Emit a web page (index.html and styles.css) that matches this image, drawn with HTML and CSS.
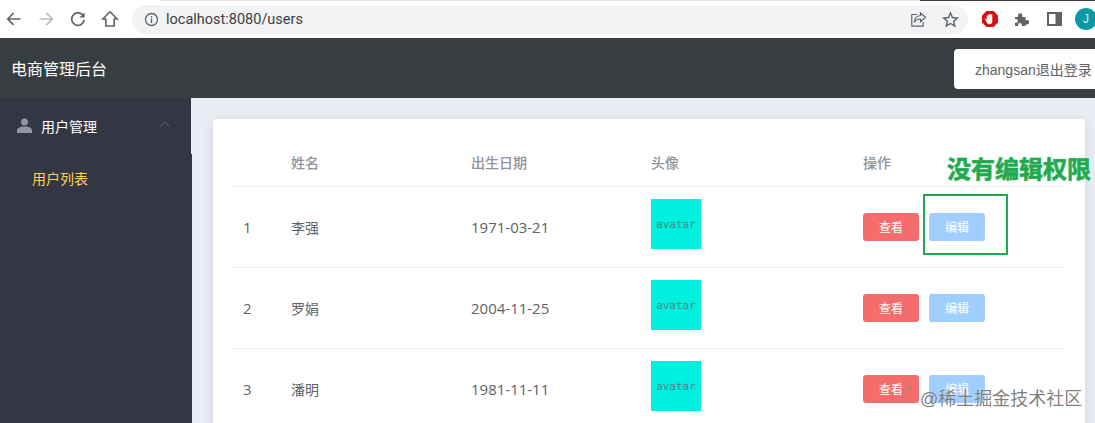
FILE: index.html
```html
<!DOCTYPE html>
<html lang="zh">
<head>
<meta charset="utf-8">
<title>电商管理后台</title>
<link rel="stylesheet" href="styles.css">
</head>
<body>
<div class="chrome">
  <svg class="nav" width="18" height="18" viewBox="0 0 18 18"><path d="M15.5 9H3M8.5 3.2 2.8 9l5.700 5.800" fill="none" stroke="#5f6368" stroke-width="1.700"/></svg>
  <svg class="nav" width="18" height="18" viewBox="0 0 18 18"><path d="M2.500 9H15M9.500 3.200 15.200 9l-5.700 5.800" fill="none" stroke="#b9bbbe" stroke-width="1.700"/></svg>
  <svg class="nav" width="18" height="18" viewBox="0 0 18 18"><path d="M14.600 6.200A6.300 6.300 0 1 0 15.200 10" fill="none" stroke="#5f6368" stroke-width="1.700"/><path d="M15.600 2.400v5.200h-5.200z" fill="#5f6368"/></svg>
  <svg class="nav" width="18" height="18" viewBox="0 0 18 18"><path d="M9 1.800 1.800 9h3v7h8.400V9h3z" fill="none" stroke="#5f6368" stroke-width="1.600" stroke-linejoin="miter"/></svg>
  <div class="omnibox">
    <svg width="15" height="15" viewBox="0 0 15 15"><circle cx="7.500" cy="7.500" r="6" fill="none" stroke="#5f6368" stroke-width="1.300"/><path d="M7.500 6.500v4.500M7.500 4v1.500" stroke="#5f6368" stroke-width="1.400"/></svg>
    <span class="url">localhost:8080/users</span>
    <span class="omni-spacer"></span>
    <svg class="share" width="17" height="17" viewBox="0 0 17 17"><path d="M7 3.500H1.800v11.700h11.400V11M10.500 2l5 4.300-5 4.300V8C7.500 8 5.500 9 4.300 11.500 4.500 8 6.500 4.800 10.500 4.500z" fill="none" stroke="#5f6368" stroke-width="1.200"/></svg>
    <svg width="17" height="17" viewBox="0 0 17 17"><path d="m8.500 2 2 4.500 4.800.5-3.600 3.200 1 4.800-4.200-2.500L4.300 15l1-4.800L1.700 7l4.800-.5z" fill="none" stroke="#5f6368" stroke-width="1.400"/></svg>
  </div>
  <svg class="ext ext-abp" width="18" height="18" viewBox="0 0 18 18"><path d="M5.500 1h7L17 5.500v7L12.500 17h-7L1 12.500v-7z" fill="#d90f0f"/><path d="M5.800 9.500V6.300c0-1 1.300-1 1.300 0V5c0-1 1.300-1 1.400 0v-.6c0-1 1.400-1 1.400 0V5c.1-1 1.400-1 1.400 0v6c0 2-1 3.300-2.900 3.300-1.500 0-2.300-.8-2.900-2.300L4.300 9.500c-.4-1 .8-1.400 1.500 0z" fill="#fff"/></svg>
  <svg class="ext ext-puzzle" width="16" height="16" viewBox="0 0 16 16"><path d="M1 6h3V4.500a2.200 2.200 0 0 1 4.400 0V6h3.100v3H13a2.200 2.200 0 0 1 0 4.400h-1.500V15H7.800v-1.300a1.800 1.800 0 0 0-3.600 0V15H1v-3.200h1a1.900 1.900 0 0 0 0-3.800H1z" fill="#5f6368"/></svg>
  <svg class="ext ext-panel" width="15" height="14" viewBox="0 0 15 14"><path d="M0 0h15v14H0zM2 2v10h6.500V2z" fill="#5f6368" fill-rule="evenodd"/></svg>
  <span class="profile">J</span>
</div>
<div class="app">
  <header class="topbar">
    <span class="brand">电商管理后台</span>
    <button class="logout">zhangsan退出登录</button>
  </header>
  <div class="body">
    <aside class="sidebar">
      <div class="menu-title">
        <svg width="15" height="15" viewBox="0 0 15 15"><circle cx="7.500" cy="4" r="3.500" fill="#8f95a3"/><path d="M0 15v-2.500C0 10 3 8.500 7.500 8.500S15 10 15 12.500V15z" fill="#8f95a3"/></svg>
        <span class="menu-text">用户管理</span>
        <svg class="caret" width="10" height="6" viewBox="0 0 10 6"><path d="M.5 5.500 5 1l4.500 4.500" fill="none" stroke="#5d6372" stroke-width="1"/></svg>
      </div>
      <div class="menu-item">用户列表</div>
    </aside>
    <main class="content">
      <section class="card">
        <table class="users">
          <thead>
            <tr><th class="c-id"></th><th class="c-name">姓名</th><th class="c-date">出生日期</th><th class="c-avatar">头像</th><th>操作</th></tr>
          </thead>
          <tbody>
            <tr><td class="num">1</td><td>李强</td><td class="num">1971-03-21</td><td><span class="avatar">avatar</span></td><td><button class="btn view">查看</button><button class="btn edit">编辑</button></td></tr>
            <tr><td class="num">2</td><td>罗娟</td><td class="num">2004-11-25</td><td><span class="avatar">avatar</span></td><td><button class="btn view">查看</button><button class="btn edit">编辑</button></td></tr>
            <tr><td class="num">3</td><td>潘明</td><td class="num">1981-11-11</td><td><span class="avatar">avatar</span></td><td><button class="btn view">查看</button><button class="btn edit">编辑</button></td></tr>
          </tbody>
        </table>
      </section>
    </main>
  </div>
</div>
<div class="note-box"></div>
<div class="note-text">没有编辑权限</div>
<div class="watermark">@稀土掘金技术社区</div>
</body>
</html>
```
FILE: styles.css
```css
* { box-sizing: border-box; }
html, body { margin: 0; height: 423px; overflow: hidden; }
body { position: relative; width: 1095px; font-family: "Liberation Sans", "Noto Sans CJK SC", sans-serif; background: #fff; }
svg { flex: none; display: block; }
.chrome { height: 38px; display: flex; align-items: center; padding: 0 0 0 5px; gap: 14px; overflow: hidden; background: linear-gradient(to right, #fff 160px, #dfe1e5 160px, #dfe1e5 920px, #3a3d41 920px) top / 100% 1px no-repeat, #fff; }
.omnibox { width: 836px; height: 29px; flex: none; margin-left: -1px; padding: 0 9px 0 12px; display: flex; align-items: center; gap: 7px; background: #f1f3f4; border-radius: 15px; }
.url { font-family: "Roboto", "Liberation Sans", sans-serif; font-size: 14.5px; color: #3c4043; }
.omni-spacer { flex: 1; }
.share { margin-right: 8px; }
.ext-abp { margin-left: -1px; }
.ext-puzzle { margin-left: 1px; }
.ext-panel { margin-left: 3px; }
.profile { width: 22px; height: 22px; flex: none; margin-left: -1px; border-radius: 50%; background: #0b9aa5; color: #d8f3f5; font-size: 12px; line-height: 22px; text-align: center; }
.app { height: 385px; display: flex; flex-direction: column; }
.topbar { height: 60px; flex: none; display: flex; align-items: center; justify-content: space-between; padding-left: 11px; background: #373d41; }
.brand { color: #fff; font-size: 16px; padding-bottom: 1px; }
.logout { width: 141px; height: 40px; margin-top: 2px; padding: 0 0 0 21px; text-align: left; border: 0; border-radius: 4px 0 0 4px; background: #fff; color: #606266; font: 14px "Liberation Sans", "Noto Sans CJK SC", sans-serif; white-space: nowrap; overflow: hidden; }
.body { flex: 1; display: flex; min-height: 0; }
.sidebar { width: 192px; flex: none; background: #333744; }
.menu-title { height: 56px; display: flex; align-items: center; padding: 0 21px 1px 17px; border-right: 1px solid #e9edf3; color: #fff; font-size: 14px; }
.menu-text { margin-left: 9px; flex: 1; }
.caret { margin-bottom: 3px; }
.menu-item { height: 50px; padding-left: 32px; line-height: 50px; color: #ffd04b; font-size: 14px; }
.content { flex: 1; padding: 21px 10px 0 21px; background: #e9edf3; }
.card { height: 320px; padding: 21px 19px 0; background: #fff; border-radius: 4px; box-shadow: 0 2px 12px rgba(0, 0, 0, .1); }
.users { width: 832px; border-collapse: collapse; table-layout: fixed; font-size: 14px; color: #606266; }
.users th { height: 46px; padding: 0 0 1px; text-align: left; font-size: 14px; font-weight: 500; color: #909399; border-bottom: 1px solid #ebeef5; }
.users td { height: 81px; padding: 0; border-bottom: 1px solid #ebeef5; }
.users td:first-child { padding-left: 11px; }
.users .num { font-family: "Open Sans", "Liberation Sans", sans-serif; font-size: 15px; }
.c-id { width: 59px; }
.c-name, .c-date { width: 180px; }
.c-avatar { width: 212px; }
.avatar { display: block; width: 50px; height: 50px; margin-bottom: 6px; background: #00f0e0; color: #4f8585; font: 11px/51px "DejaVu Sans Mono", monospace; text-align: center; }
.btn { width: 56px; height: 28px; padding: 0; border: 0; border-radius: 3px; color: #fff; font: 12px "Liberation Sans", "Noto Sans CJK SC", sans-serif; vertical-align: middle; }
.view { background: #f56c6c; }
.edit { margin-left: 10px; background: #a0cfff; }
.note-box { position: absolute; left: 923px; top: 194px; width: 85px; height: 61px; border: 2px solid #22a84f; }
.note-text { position: absolute; left: 947px; top: 155px; color: #22a84f; font-size: 24px; font-weight: 700; line-height: 30px; white-space: nowrap; -webkit-text-stroke: .5px #22a84f; text-shadow: 0 0 3px #cdeed6, 0 0 2px #e4f6e9; }
.watermark { position: absolute; left: 920px; top: 388px; color: rgba(60, 60, 60, .68); font-size: 18px; line-height: 22px; white-space: nowrap; text-shadow: 0 0 1px #fff; }
```
